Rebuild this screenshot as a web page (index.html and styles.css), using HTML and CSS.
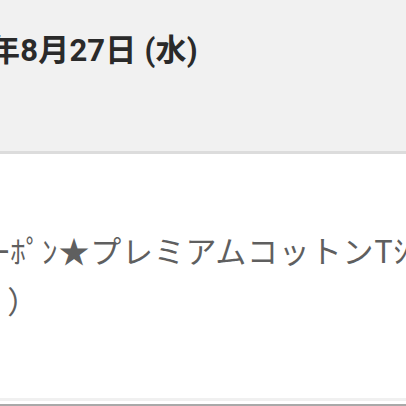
FILE: index.html
```html
<!DOCTYPE html>
<html lang="ja">
<head>
  <meta charset="UTF-8" />
  <meta name="viewport" content="width=device-width, initial-scale=1.0"/>
  <title>注文履歴</title>
  <link rel="stylesheet" href="styles.css">
</head>
<body>

<div class="page">
  <!-- 日付ヘッダー -->
  <div class="date-bar">
    <div class="date">年8月27日 (水)</div>
  </div>

  <!-- 商品名 -->
  <div class="item">
    <div class="item-name">ｰﾎﾟﾝ★プレミアムコットンTｼｬﾂ</div>
    <div class="item-name item-name-end">ﾞ）</div>
  </div>

  <div class="foot"></div>
</div>

</body>
</html>
```

FILE: styles.css
```css
html, body {
  margin: 0;
  padding: 0;
  background: #fff;
  font-family: Roboto, "Noto Sans CJK JP", sans-serif;
}

.page {
  width: 406px;
  height: 406px;
  overflow: hidden;
  display: flex;
  flex-direction: column;
}

/* 日付ヘッダー */
.date-bar {
  height: 154px;
  flex-shrink: 0;
  box-sizing: border-box;
  padding-top: 31px;
  background: #f1f1f1;
  border-bottom: 3px solid #dcdcdc;
}

.date {
  margin-left: -11px;
  font-size: 31px;
  font-weight: 700;
  line-height: 40px;
  letter-spacing: 0.2px;
  color: #2a2a2a;
  white-space: nowrap;
}

/* 商品名 */
.item {
  flex: 1;
  padding-top: 71px;
  box-sizing: border-box;
}

.item-name {
  margin-left: -6px;
  font-family: "Noto Sans CJK JP", sans-serif;
  font-size: 31px;
  line-height: 50px;
  letter-spacing: 0.8px;
  color: #5f5f5f;
  white-space: nowrap;
}

.item-name-end {
  margin-left: -9px;
}

.foot {
  height: 3px;
  flex-shrink: 0;
  border-top: 3px solid #f0f0f0;
  border-bottom: 2px solid #a9a9a9;
}
```
